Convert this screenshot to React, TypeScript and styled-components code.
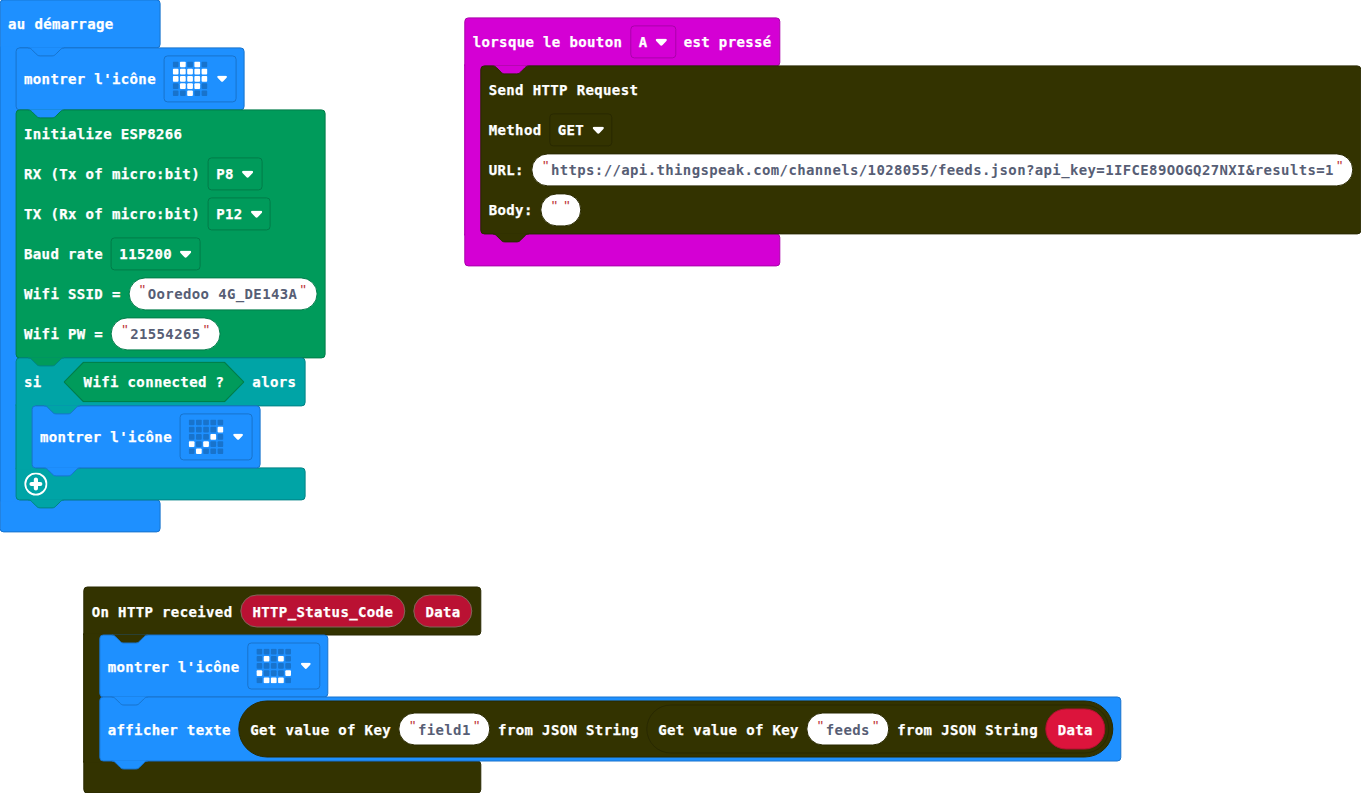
import React from 'react';
import styled, { createGlobalStyle } from 'styled-components';

type Tone = { fill: string; stroke: string };

const basic: Tone = { fill: '#1e90ff', stroke: '#1873cc' };
const wifi: Tone = { fill: '#009b5b', stroke: '#007c49' };
const logic: Tone = { fill: '#00a4a6', stroke: '#008385' };
const input: Tone = { fill: '#d400d4', stroke: '#aa00aa' };
const http: Tone = { fill: '#333300', stroke: '#292900' };

const GlobalStyle = createGlobalStyle`
  body {
    margin: 0;
    background: #fff;
    overflow: hidden;
  }
`;

const Workspace = styled.main`
  position: relative;
  width: 1361px;
  height: 793px;
  overflow: hidden;
  color: #fff;
  font: bold 14px/16px "DejaVu Sans Mono", "Liberation Mono", monospace;
  letter-spacing: 0.369px;
  -webkit-text-stroke: 0.25px currentColor;
  white-space: pre;
`;

const Stack = styled.section<{ $x: number; $y: number }>`
  position: absolute;
  left: 0;
  top: 0;
  transform: translate(${(p) => p.$x}px, ${(p) => p.$y}px);
`;

const Wrap = styled.div<{ $w: number }>`
  position: relative;
  display: flex;
  flex-direction: column;
  width: ${(p) => p.$w + 1}px;
`;

const Head = styled.div<{ $tone: Tone }>`
  box-sizing: border-box;
  display: flex;
  align-items: center;
  gap: 7.8px;
  height: 49px;
  margin-bottom: -1px;
  padding-left: 7.4px;
  background: ${(p) => p.$tone.fill};
  border: 1px solid ${(p) => p.$tone.stroke};
  border-radius: 4px 4px 4px 0;
`;

const Body = styled.div<{ $tone: Tone }>`
  position: relative;
  z-index: 1;
  display: flex;
  flex-direction: column;
  align-items: flex-start;
  padding-left: 16px;

  &::before {
    content: '';
    position: absolute;
    left: 0;
    top: -1px;
    bottom: -2px;
    width: 19px;
    background: ${(p) => p.$tone.fill};
    border-left: 1px solid ${(p) => p.$tone.stroke};
  }
`;

const Foot = styled.div<{ $tone: Tone }>`
  box-sizing: border-box;
  display: flex;
  align-items: center;
  height: 33px;
  margin-bottom: -1px;
  padding-left: 7px;
  background: ${(p) => p.$tone.fill};
  border: 1px solid ${(p) => p.$tone.stroke};
  border-radius: 0 4px 4px 4px;
`;

const Slot = styled.div`
  position: relative;
`;

const Statement = styled.div<{ $tone: Tone; $h: number }>`
  box-sizing: border-box;
  display: flex;
  flex-direction: column;
  justify-content: center;
  height: ${(p) => p.$h + 1}px;
  margin-bottom: -1px;
  padding: 0 7px 0 7.4px;
  background: ${(p) => p.$tone.fill};
  border: 1px solid ${(p) => p.$tone.stroke};
  border-radius: 4px;
`;

const Row = styled.div<{ $h?: number }>`
  display: flex;
  align-items: center;
  gap: 7.6px;
  height: ${(p) => p.$h ?? 40}px;
`;

const Label = styled.span<{ $gap?: number }>`
  margin-right: ${(p) => p.$gap ?? 0}px;
`;

const NotchSvg = styled.svg<{ $end?: boolean }>`
  position: absolute;
  z-index: 2;
  left: ${(p) => (p.$end ? 28 : 12)}px;
  ${(p) => (p.$end ? 'bottom: -10px;' : 'top: -1px;')}
`;

function Notch({ fill, stroke, end }: { fill: string; stroke: string; end?: boolean }) {
  const d = 'M0.5 1.5c2 0 3 1 4 2l4 4c1 1 2 2 4 2h12c2 0 3-1 4-2l4-4c1-1 2-2 4-2';
  return (
    <NotchSvg $end={end} width="37" height="11" viewBox="0 0 37 11">
      <path d={d + 'V0.9H0.5z'} fill={fill} />
      <path d={d} fill="none" stroke={stroke} />
    </NotchSvg>
  );
}

const DropBox = styled.span<{ $stroke: string; $icon?: boolean }>`
  box-sizing: border-box;
  display: flex;
  align-items: center;
  gap: ${(p) => (p.$icon ? 9 : 7.8)}px;
  height: ${(p) => (p.$icon ? 47 : 33)}px;
  padding: 0 ${(p) => (p.$icon ? 8.5 : 7.6)}px 0 7.6px;
  border: 1px solid ${(p) => p.$stroke};
  border-radius: 4px;
`;

function Caret({ small }: { small?: boolean }) {
  return (
    <svg width={small ? 11 : 12} height={small ? 7 : 8} viewBox="0 0 12 8">
      <path d="M1.9 0.4h8.2c1.4 0 1.9 1.3 1 2.3L7.3 6.7c-.8.9-1.8.9-2.6 0L.9 2.7C0 1.7.5.4 1.9.4z" fill="#fff" />
    </svg>
  );
}

function Dropdown({ value, tone }: { value: string; tone: Tone }) {
  return (
    <DropBox $stroke={tone.stroke}>
      <span>{value}</span>
      <Caret />
    </DropBox>
  );
}

function LedIcon({ rows }: { rows: string[] }) {
  return (
    <Row $h={62}>
      <Label>montrer l'icône</Label>
      <DropBox $stroke={basic.stroke} $icon>
        <svg width="35" height="35" viewBox="0 0 35 35">
          {rows.map((row, y) =>
            row.split('').map((c, x) => (
              <rect
                key={`${x}-${y}`}
                x={0.2 + x * 7.2}
                y={0.2 + y * 7.2}
                width="5.7"
                height="5.7"
                rx="1"
                fill={c === '#' ? '#fff' : '#1873cc'}
              />
            )),
          )}
        </svg>
        <Caret small />
      </DropBox>
    </Row>
  );
}

const TextPill = styled.span<{ $stroke: string }>`
  box-sizing: border-box;
  display: flex;
  align-items: center;
  justify-content: space-between;
  min-width: 40.6px;
  height: 33px;
  padding: 0 9px 0 10.4px;
  color: #575e75;
  -webkit-text-stroke: 0;
  background: #fff;
  border: 1px solid ${(p) => p.$stroke};
  border-radius: 17px;
`;

const Quote = styled.span`
  width: 8px;
  height: 25px;
  color: #c0393d;
  font: 15px/18px "Liberation Sans", Arial, sans-serif;
  letter-spacing: 0;
`;

const QuoteEnd = styled(Quote)`
  margin-left: 1.9px;
  text-align: center;
`;

function Text({ value, tone }: { value: string; tone: Tone }) {
  return (
    <TextPill $stroke={tone.stroke}>
      <Quote>"</Quote>
      {value && <span>{value}</span>}
      <QuoteEnd>"</QuoteEnd>
    </TextPill>
  );
}

const Variable = styled.span<{ $param?: boolean }>`
  box-sizing: border-box;
  display: flex;
  align-items: center;
  height: ${(p) => (p.$param ? 33 : 41)}px;
  padding: 0 11.2px;
  background: ${(p) => (p.$param ? '#ba1133' : '#dc143c')};
  border: 1px solid ${(p) => (p.$param ? '#80675a' : '#b01030')};
  border-radius: 21px;
`;

const Reporter = styled.span<{ $h: number; $end: number }>`
  box-sizing: border-box;
  display: flex;
  align-items: center;
  gap: 7.5px;
  height: ${(p) => p.$h}px;
  padding: 0 ${(p) => p.$end}px 0 10.8px;
  background: #333300;
  border: 1px solid #292900;
  border-radius: 29px;
`;

const Hexagon = styled.span`
  position: relative;
  display: flex;
  align-items: center;
  height: 41px;
  padding: 0 20.2px;
  background: ${wifi.stroke};
  clip-path: polygon(20px 0, calc(100% - 20px) 0, 100% 50%, calc(100% - 20px) 100%, 20px 100%, 0 50%);

  &::before {
    content: '';
    position: absolute;
    inset: 1px 1.4px;
    background: ${wifi.fill};
    clip-path: polygon(19.2px 0, calc(100% - 19.2px) 0, 100% 50%, calc(100% - 19.2px) 100%, 19.2px 100%, 0 50%);
  }

  span {
    position: relative;
  }
`;

function AddIcon() {
  return (
    <svg width="24" height="24" viewBox="0 0 24 24">
      <circle cx="12.3" cy="11.6" r="10.6" fill="none" stroke="#fff" strokeWidth="1.8" />
      <path d="M12.3 7.2v8.8M7.9 11.6h8.8" stroke="#fff" strokeWidth="4.2" strokeLinecap="round" />
    </svg>
  );
}

const HEART = ['.#.#.', '#####', '#####', '.###.', '..#..'];
const CHECK = ['.....', '....#', '...#.', '#.#..', '.#...'];
const HAPPY = ['.....', '.#.#.', '.....', '#...#', '.###.'];

export default function App() {
  return (
    <>
      <GlobalStyle />
      <Workspace>
        <Stack $x={-0.4} $y={-0.6}>
          <Wrap $w={160}>
            <Head $tone={basic}>
              <Label>au démarrage</Label>
            </Head>
            <Body $tone={basic}>
              <Slot>
                <Notch fill={basic.fill} stroke={basic.stroke} />
                <Statement $tone={basic} $h={62}>
                  <LedIcon rows={HEART} />
                </Statement>
              </Slot>
              <Slot>
                <Notch fill={basic.fill} stroke={wifi.stroke} />
                <Statement $tone={wifi} $h={248}>
                  <Row>
                    <Label>Initialize ESP8266</Label>
                  </Row>
                  <Row>
                    <Label>RX (Tx of micro:bit)</Label>
                    <Dropdown value="P8" tone={wifi} />
                  </Row>
                  <Row>
                    <Label>TX (Rx of micro:bit)</Label>
                    <Dropdown value="P12" tone={wifi} />
                  </Row>
                  <Row>
                    <Label>Baud rate</Label>
                    <Dropdown value="115200" tone={wifi} />
                  </Row>
                  <Row>
                    <Label>Wifi SSID =</Label>
                    <Text value="Ooredoo 4G_DE143A" tone={wifi} />
                  </Row>
                  <Row>
                    <Label>Wifi PW =</Label>
                    <Text value="21554265" tone={wifi} />
                  </Row>
                </Statement>
              </Slot>
              <Slot>
                <Notch fill={wifi.fill} stroke={logic.stroke} />
                <Wrap $w={289}>
                  <Head $tone={logic}>
                    <Label $gap={14}>si</Label>
                    <Hexagon>
                      <span>Wifi connected ?</span>
                    </Hexagon>
                    <Label>alors</Label>
                  </Head>
                  <Body $tone={logic}>
                    <Slot>
                      <Notch fill={logic.fill} stroke={basic.stroke} />
                      <Statement $tone={basic} $h={62}>
                        <LedIcon rows={CHECK} />
                      </Statement>
                    </Slot>
                    <Notch end fill={basic.fill} stroke={basic.stroke} />
                  </Body>
                  <Foot $tone={logic}>
                    <AddIcon />
                  </Foot>
                </Wrap>
              </Slot>
              <Notch end fill={logic.fill} stroke={logic.stroke} />
            </Body>
            <Foot $tone={basic} />
          </Wrap>
        </Stack>

        <Stack $x={464.3} $y={17.4}>
          <Wrap $w={315}>
            <Head $tone={input}>
              <Label>lorsque le bouton</Label>
              <Dropdown value="A" tone={input} />
              <Label>est pressé</Label>
            </Head>
            <Body $tone={input}>
              <Slot>
                <Notch fill={input.fill} stroke={http.stroke} />
                <Statement $tone={http} $h={168}>
                  <Row>
                    <Label>Send HTTP Request</Label>
                  </Row>
                  <Row>
                    <Label>Method</Label>
                    <Dropdown value="GET" tone={http} />
                  </Row>
                  <Row>
                    <Label>URL:</Label>
                    <Text
                      value="https://api.thingspeak.com/channels/1028055/feeds.json?api_key=1IFCE89OOGQ27NXI&results=1"
                      tone={http}
                    />
                  </Row>
                  <Row>
                    <Label>Body:</Label>
                    <Text value="" tone={http} />
                  </Row>
                </Statement>
              </Slot>
              <Notch end fill={http.fill} stroke={http.stroke} />
            </Body>
            <Foot $tone={input} />
          </Wrap>
        </Stack>

        <Stack $x={83.3} $y={586.5}>
          <Wrap $w={397}>
            <Head $tone={http}>
              <Label>On HTTP received</Label>
              <Variable $param>HTTP_Status_Code</Variable>
              <Variable $param>Data</Variable>
            </Head>
            <Body $tone={http}>
              <Slot>
                <Notch fill={http.fill} stroke={basic.stroke} />
                <Statement $tone={basic} $h={62}>
                  <LedIcon rows={HAPPY} />
                </Statement>
              </Slot>
              <Slot>
                <Notch fill={basic.fill} stroke={basic.stroke} />
                <Statement $tone={basic} $h={64}>
                  <Row $h={64}>
                    <Label>afficher texte</Label>
                    <Reporter $h={57} $end={3.2}>
                      <Label>Get value of Key</Label>
                      <Text value="field1" tone={http} />
                      <Label>from JSON String</Label>
                      <Reporter $h={49} $end={3.2}>
                        <Label>Get value of Key</Label>
                        <Text value="feeds" tone={http} />
                        <Label>from JSON String</Label>
                        <Variable>Data</Variable>
                      </Reporter>
                    </Reporter>
                  </Row>
                </Statement>
              </Slot>
              <Notch end fill={basic.fill} stroke={basic.stroke} />
            </Body>
            <Foot $tone={http} />
          </Wrap>
        </Stack>
      </Workspace>
    </>
  );
}
